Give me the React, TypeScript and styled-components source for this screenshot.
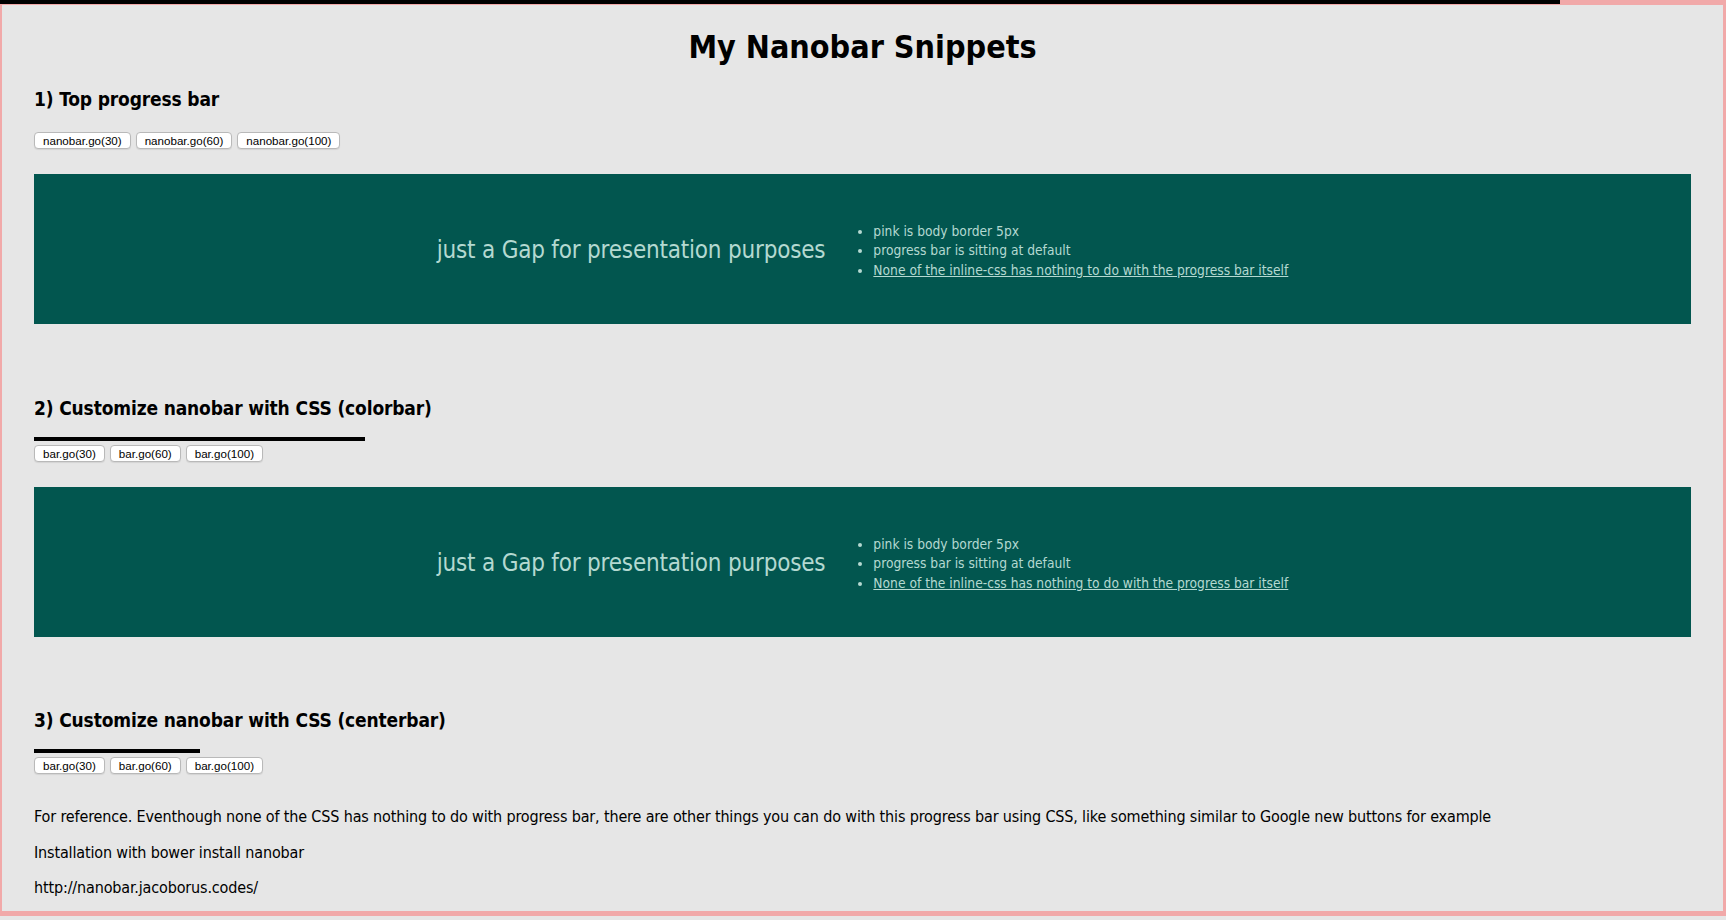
import styled, { createGlobalStyle } from 'styled-components';

const GlobalStyle = createGlobalStyle`
    html {
        background: #e6e6e6;
    }
    body {
        margin: 0;
        padding: 0 32px;
        background: #e6e6e6;
        border-style: solid;
        border-color: #f1a9a9;
        border-width: 5px 3px 5px 2px;
        font-family: "DejaVu Sans Condensed", "DejaVu Sans", sans-serif;
        font-stretch: semi-condensed;
        color: #000;
    }
`;

const TopBar = styled.div<{ progress: number }>`
    position: fixed;
    top: 0;
    left: 0;
    height: 4px;
    width: ${({ progress }) => progress}%;
    background: #000;
    z-index: 10;
`;

const Page = styled.div`
    display: flex;
    flex-direction: column;
`;

const Title = styled.h1`
    margin: 23px 0 0;
    font-size: 32px;
    line-height: 38px;
    font-weight: 700;
    text-align: center;
`;

const SectionHeading = styled.h3<{ gap: number }>`
    margin: ${({ gap }) => gap}px 0 0;
    font-size: 19px;
    line-height: 22px;
    font-weight: 700;
    letter-spacing: -0.15px;
`;

const BarTrack = styled.div`
    margin-top: 18px;
    height: 4px;
`;

const Bar = styled.div<{ width: number }>`
    width: ${({ width }) => width}px;
    height: 4px;
    background: #000;
`;

const ButtonRow = styled.div<{ gap: number }>`
    display: flex;
    gap: 5px;
    margin-top: ${({ gap }) => gap}px;
`;

const GoButton = styled.button`
    height: 17px;
    padding: 0 8px;
    border: 1px solid #b9b9b9;
    border-radius: 4px;
    background: #fff;
    box-shadow: 0 1px 1px rgba(0, 0, 0, 0.08);
    font-family: "Liberation Sans", Arial, sans-serif;
    font-size: 11.6px;
    line-height: 15px;
    color: #000;
    cursor: pointer;
`;

const GapBox = styled.div`
    margin-top: 25px;
    height: 150px;
    background: #02564f;
    color: #b4d9d1;
    display: flex;
    align-items: center;
    justify-content: center;
`;

const GapText = styled.span`
    padding-top: 3px;
    font-size: 24px;
    line-height: 29px;
    letter-spacing: -0.2px;
`;

const NoteList = styled.ul`
    margin: 0;
    padding: 4px 0 0 48px;
    font-size: 13.7px;
    line-height: 19.6px;
`;

const NoteLink = styled.a`
    color: inherit;
    text-decoration: underline;
`;

const Paragraph = styled.p<{ gap: number }>`
    margin: ${({ gap }) => gap}px 0 0;
    font-size: 16px;
    line-height: 19.5px;
    letter-spacing: -0.15px;

    &:last-child {
        margin-bottom: 13px;
    }
`;

function Buttons({ prefix, gap }: { prefix: string; gap: number }) {
    return (
        <ButtonRow gap={gap}>
            {[30, 60, 100].map((v) => (
                <GoButton key={v}>{`${prefix}.go(${v})`}</GoButton>
            ))}
        </ButtonRow>
    );
}

function PresentationGap() {
    return (
        <GapBox>
            <GapText>just a Gap for presentation purposes</GapText>
            <NoteList>
                <li>pink is body border 5px</li>
                <li>progress bar is sitting at default</li>
                <li>
                    <NoteLink href="#">None of the inline-css has nothing to do with the progress bar itself</NoteLink>
                </li>
            </NoteList>
        </GapBox>
    );
}

export default function App() {
    return (
        <>
            <GlobalStyle />
            <TopBar progress={90.4} />
            <Page>
                <Title>My Nanobar Snippets</Title>

                <SectionHeading gap={22}>1) Top progress bar</SectionHeading>
                <Buttons prefix="nanobar" gap={22} />
                <PresentationGap />

                <SectionHeading gap={73}>2) Customize nanobar with CSS (colorbar)</SectionHeading>
                <BarTrack>
                    <Bar width={331} />
                </BarTrack>
                <Buttons prefix="bar" gap={4} />
                <PresentationGap />

                <SectionHeading gap={72}>3) Customize nanobar with CSS (centerbar)</SectionHeading>
                <BarTrack>
                    <Bar width={166} />
                </BarTrack>
                <Buttons prefix="bar" gap={4} />

                <Paragraph gap={33}>
                    For reference. Eventhough none of the CSS has nothing to do with progress bar, there are other things you can do with this progress bar using CSS, like something similar to Google new buttons for example
                </Paragraph>
                <Paragraph gap={16}>Installation with bower install nanobar</Paragraph>
                <Paragraph gap={16}>http://nanobar.jacoborus.codes/</Paragraph>
            </Page>
        </>
    );
}
